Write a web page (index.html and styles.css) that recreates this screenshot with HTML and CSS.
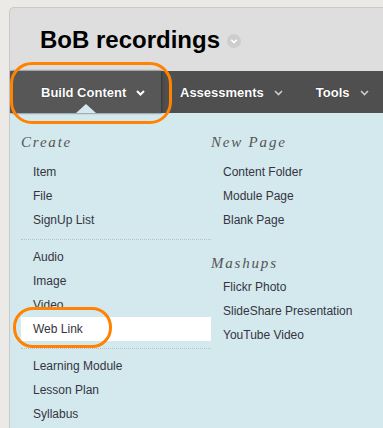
FILE: index.html
```html
<!DOCTYPE html>
<html lang="en">
<head>
    <meta charset="UTF-8">
    <title>BoB recordings</title>
    <link rel="stylesheet" href="styles.css">
</head>
<body>
<div class="panel">
    <div class="title-bar">
        <h1>BoB recordings</h1>
        <span class="title-toggle">
            <svg width="14" height="14" viewBox="0 0 14 14"><circle cx="7" cy="7" r="7" fill="#cdcdcd"/><path d="M4.2 5.8 L7 8.6 L9.8 5.8" fill="none" stroke="#fff" stroke-width="1.6"/></svg>
        </span>
    </div>

    <div class="nav">
        <div class="nav-item active">
            Build Content
            <svg class="chev" width="9" height="6" viewBox="0 0 9 6"><path d="M1 1 L4.5 4.5 L8 1" fill="none" stroke="#fff" stroke-width="2"/></svg>
            <span class="pointer"></span>
        </div>
        <div class="nav-item">
            Assessments
            <svg class="chev" width="9" height="6" viewBox="0 0 9 6"><path d="M1 1 L4.5 4.5 L8 1" fill="none" stroke="#ccc" stroke-width="1.6"/></svg>
        </div>
        <div class="nav-item">
            Tools
            <svg class="chev" width="9" height="6" viewBox="0 0 9 6"><path d="M1 1 L4.5 4.5 L8 1" fill="none" stroke="#ccc" stroke-width="1.6"/></svg>
        </div>
    </div>

    <div class="menu">
        <div class="column">
            <h3>Create</h3>
            <ul>
                <li>Item</li>
                <li>File</li>
                <li>SignUp List</li>
            </ul>
            <hr>
            <ul>
                <li>Audio</li>
                <li>Image</li>
                <li>Video</li>
                <li class="hover">Web Link</li>
            </ul>
            <hr>
            <ul>
                <li>Learning Module</li>
                <li>Lesson Plan</li>
                <li>Syllabus</li>
            </ul>
        </div>
        <div class="column">
            <h3>New Page</h3>
            <ul>
                <li>Content Folder</li>
                <li>Module Page</li>
                <li>Blank Page</li>
            </ul>
            <h3 class="second">Mashups</h3>
            <ul>
                <li>Flickr Photo</li>
                <li>SlideShare Presentation</li>
                <li>YouTube Video</li>
            </ul>
        </div>
    </div>
</div>

<!-- orange highlight marks -->
<div class="mark mark-nav"></div>
<div class="mark mark-link"></div>
</body>
</html>
```

FILE: styles.css
```css
body {
    margin: 0;
    padding: 7px 0 0 9px;
    background-color: #ebeae7;
    font-family: "Liberation Sans", Arial, sans-serif;
    overflow: hidden;
}

.panel {
    background-color: #dedede;
    border-top: 1px solid #c9c9c9;
    border-left: 1px solid #c9c9c9;
    border-top-left-radius: 5px;
}

.title-bar {
    height: 63px;
    display: flex;
    align-items: center;
    padding-left: 30px;
}

h1 {
    margin: 0;
    font-size: 24px;
    font-weight: bold;
    color: #000;
}

.title-toggle {
    display: flex;
    margin-left: 7px;
    margin-top: 2px;
}

.nav {
    height: 42px;
    background-color: #4f4f4f;
    display: flex;
    align-items: stretch;
}

.nav-item {
    position: relative;
    flex-shrink: 0;
    display: flex;
    align-items: center;
    gap: 10px;
    padding: 0 14px 0 19px;
    color: #fff;
    font-size: 13px;
    font-weight: bold;
    white-space: nowrap;
    text-shadow: 0 0 1px #222;
}

.nav-item.active {
    box-sizing: border-box;
    width: 151px;
    padding-left: 31px;
    background-color: #575757;
    box-shadow: 1px 0 2px #333;
}

.chev {
    margin-top: 1px;
}

.pointer {
    position: absolute;
    left: 66px;
    bottom: 0;
    width: 0;
    height: 0;
    border-left: 10px solid transparent;
    border-right: 10px solid transparent;
    border-bottom: 9px solid #d3e9ee;
}

.menu {
    background-color: #d3e9ee;
    display: flex;
    padding: 19px 0 20px 11px;
}

.column {
    flex-shrink: 0;
    width: 190px;
}

h3 {
    margin: 0 0 8px 0;
    height: 20px;
    line-height: 20px;
    font-family: "Liberation Serif", Georgia, serif;
    font-style: italic;
    font-weight: normal;
    font-size: 15px;
    letter-spacing: 1.8px;
    color: #555;
}

h3.second {
    margin-top: 21px;
    margin-bottom: 2px;
}

ul {
    list-style: none;
    margin: 0;
    padding: 0;
}

li {
    height: 24px;
    line-height: 24px;
    padding-left: 12px;
    font-size: 12px;
    color: #363440;
}

li.hover {
    background-color: #fff;
}

hr {
    margin: 7px 0 5px 0;
    height: 0;
    border: none;
    border-top: 1px dotted #b4c3c7;
}

.mark {
    position: absolute;
    border: 3px solid #ff8300;
    box-sizing: border-box;
}

.mark-nav {
    left: 10px;
    top: 62px;
    width: 162px;
    height: 62px;
    border-radius: 22px;
}

.mark-link {
    left: 13px;
    top: 307px;
    width: 99px;
    height: 41px;
    border-radius: 20px;
}
```
